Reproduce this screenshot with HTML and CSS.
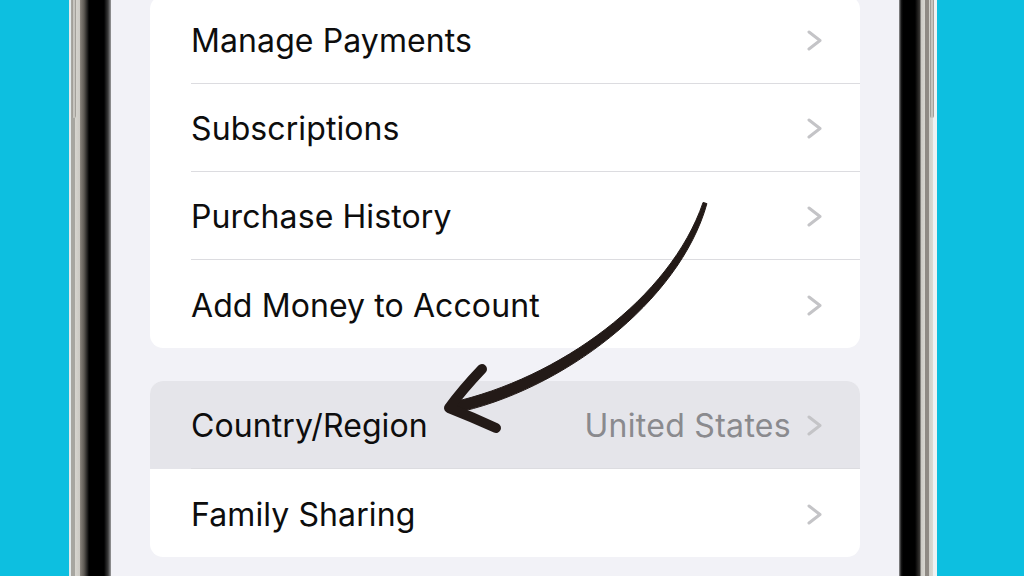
FILE: index.html
```html
<!DOCTYPE html>
<html lang="en">

<head>
    <meta charset="UTF-8">
    <meta name="viewport" content="width=device-width, initial-scale=1.0">
    <title>Account Settings</title>
    <link rel="stylesheet" href="styles.css">
</head>

<body>
    <div class="phone">
        <div class="screen">
            <ul class="group group-top">
                <li class="row">
                    <div class="row-inner">
                        <span class="label">Manage Payments</span>
                        <svg class="chevron" viewBox="0 0 15 21"><polyline points="2,2 13,10.5 2,19" /></svg>
                    </div>
                </li>
                <li class="row">
                    <div class="row-inner">
                        <span class="label">Subscriptions</span>
                        <svg class="chevron" viewBox="0 0 15 21"><polyline points="2,2 13,10.5 2,19" /></svg>
                    </div>
                </li>
                <li class="row">
                    <div class="row-inner">
                        <span class="label">Purchase History</span>
                        <svg class="chevron" viewBox="0 0 15 21"><polyline points="2,2 13,10.5 2,19" /></svg>
                    </div>
                </li>
                <li class="row">
                    <div class="row-inner">
                        <span class="label">Add Money to Account</span>
                        <svg class="chevron" viewBox="0 0 15 21"><polyline points="2,2 13,10.5 2,19" /></svg>
                    </div>
                </li>
            </ul>

            <ul class="group">
                <li class="row row-active">
                    <div class="row-inner">
                        <span class="label">Country/Region</span>
                        <span class="value">United States</span>
                        <svg class="chevron" viewBox="0 0 15 21"><polyline points="2,2 13,10.5 2,19" /></svg>
                    </div>
                </li>
                <li class="row">
                    <div class="row-inner">
                        <span class="label">Family Sharing</span>
                        <svg class="chevron" viewBox="0 0 15 21"><polyline points="2,2 13,10.5 2,19" /></svg>
                    </div>
                </li>
            </ul>
        </div>
    </div>

    <!-- hand drawn arrow pointing at Country/Region -->
    <svg class="arrow" viewBox="0 0 1024 576">
        <path class="arrow-shaft"
            d="M706.9,203.6 C679.8,301.5 561.4,391.4 453.1,413.4 L450.9,402.6 C558.6,378.6 670.2,298.5 703.1,202.4 Z" />
        <path class="arrow-head" d="M482,369 Q462,390 449,408 Q472,417 496,428" />
    </svg>
</body>

</html>
```

FILE: styles.css
```css
/* reset */
* {
    margin: 0;
    padding: 0;
    box-sizing: border-box;
}

body {
    height: 100vh;
    overflow: hidden;
    background-color: #0dbfe0;
    font-family: Inter, "Noto Sans", Arial, sans-serif;
    position: relative;
}

/* phone frame: metal band + black bezel drawn as one gradient */
.phone {
    width: 868px;
    height: 100vh;
    margin-left: 69px;
    padding: 0 38px 0 42px;
    position: relative;
    background: linear-gradient(to right,
            #e2eaec 0, #e2eaec 2px,
            #a7a6a0 2px, #a7a6a0 6px,
            #d7d5cf 6px, #cbc9c3 11px,
            #8a857e 11px, #5e5a54 15px,
            #141414 19px, #000 20px,
            #000 35px, #3a3a3a 39px, #9a9a9c 42px,
            #9a9a9c 830px, #1a1a1a 832px,
            #000 834px, #000 846px,
            #3a3835 851px, #cbc9c3 852px,
            #d8d6d0 856px, #8f8a84 856px,
            #8f8a84 860px, #d0cec8 860px,
            #dcdad4 864px, #eef2f3 864px);
}

/* side button line */
.phone::before,
.phone::after {
    content: "";
    position: absolute;
    top: -10px;
    width: 4px;
    height: 128px;
    border-radius: 0 0 3px 3px;
    background: linear-gradient(to right, #8f8c86, #d9d7d1, #8f8c86);
}

.phone::before {
    left: 3px;
}

.phone::after {
    right: 3px;
}

.screen {
    height: 100%;
    background-color: #f2f2f7;
    padding: 0 39px;
    display: flex;
    flex-direction: column;
    gap: 33px;
}

/* grouped list */
.group {
    list-style: none;
    background-color: #ffffff;
    border-radius: 13px;
    overflow: hidden;
}

.group-top {
    margin-top: -4px;
}

.row {
    padding-left: 41px;
}

.row-active {
    background-color: #e5e5ea;
}

.row-inner {
    height: 88px;
    display: flex;
    align-items: center;
    padding: 2px 39px 0 0;
    border-bottom: 1px solid #dcdce0;
}

.row:last-child .row-inner {
    border-bottom: none;
}

.label {
    flex: 1;
    font-size: 32px;
    color: #0d0d0d;
    letter-spacing: 0.1px;
}

.value {
    font-size: 32px;
    color: #8a8a8e;
    letter-spacing: 0.3px;
    margin-right: 16px;
}

.chevron {
    width: 15px;
    height: 21px;
    margin-right: -1px;
    fill: none;
    stroke: #c4c4c7;
    stroke-width: 3;
    stroke-linecap: round;
    stroke-linejoin: round;
}

/* arrow overlay */
.arrow {
    position: absolute;
    top: 0;
    left: 0;
    width: 1024px;
    height: 576px;
    pointer-events: none;
}

.arrow-shaft {
    fill: #231a17;
    stroke: #231a17;
    stroke-width: 1;
    stroke-linejoin: round;
}

.arrow-head {
    fill: none;
    stroke: #231a17;
    stroke-width: 10;
    stroke-linecap: round;
    stroke-linejoin: round;
}
```
